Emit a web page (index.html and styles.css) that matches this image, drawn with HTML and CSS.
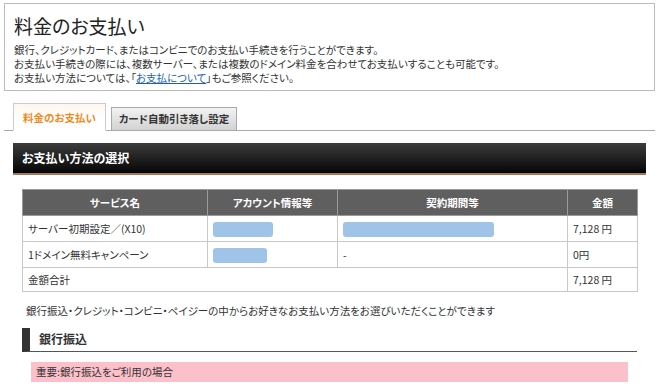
FILE: index.html
```html
<!DOCTYPE html>
<html lang="ja">
<head>
    <meta charset="UTF-8">
    <meta name="viewport" content="width=device-width, initial-scale=1.0">
    <title>料金のお支払い</title>
    <link rel="stylesheet" href="styles.css">
</head>
<body>
    <div class="page">
        <div class="intro">
            <h1>料金のお支払い</h1>
            <p>銀行、クレジットカード、またはコンビニでのお支払い手続きを行うことができます。</p>
            <p>お支払い手続きの際には、複数サーバー、または複数のドメイン料金を合わせてお支払いすることも可能です。</p>
            <p>お支払い方法については、「<a href="#">お支払について</a>」もご参照ください。</p>
        </div>

        <div class="tabs">
            <span class="tab active">料金のお支払い</span>
            <span class="tab">カード自動引き落し設定</span>
        </div>

        <div class="section-bar">お支払い方法の選択</div>

        <table class="bill">
            <colgroup>
                <col class="col-name">
                <col class="col-account">
                <col class="col-period">
                <col class="col-price">
            </colgroup>
            <tr>
                <th>サービス名</th>
                <th>アカウント情報等</th>
                <th>契約期間等</th>
                <th>金額</th>
            </tr>
            <tr>
                <td>サーバー初期設定／(X10)</td>
                <td><span class="mask" style="width:60px"></span></td>
                <td><span class="mask" style="width:151px"></span></td>
                <td>7,128 円</td>
            </tr>
            <tr>
                <td>1ドメイン無料キャンペーン</td>
                <td><span class="mask" style="width:54px"></span></td>
                <td>-</td>
                <td>0円</td>
            </tr>
            <tr class="total">
                <td colspan="3">金額合計</td>
                <td>7,128 円</td>
            </tr>
        </table>

        <p class="note">銀行振込・クレジット・コンビニ・ペイジーの中からお好きなお支払い方法をお選びいただくことができます</p>

        <h2 class="sub-head">銀行振込</h2>
        <div class="alert">重要:銀行振込をご利用の場合</div>
    </div>
</body>
</html>
```

FILE: styles.css
```css
body {
    margin: 0;
    background-color: white;
    color: #333;
    font-family: "Noto Sans CJK JP", "Noto Sans", sans-serif;
    font-size: 10.5px;
    font-feature-settings: "palt";
}
.page {
    padding: 3px 5px 0 4px;
}
.intro {
    border: 1px solid #bbb;
    height: 71px;
    padding: 9px 9px 6px;
}
.intro h1 {
    margin: 0 0 4px;
    font-size: 19px;
    font-weight: normal;
    line-height: 26px;
    color: #222;
}
.intro p {
    margin: 0;
    line-height: 14px;
}
.intro a {
    color: #1a5fbf;
}
.tabs {
    display: flex;
    align-items: flex-end;
    gap: 5px;
    margin-top: 12px;
    padding-left: 9px;
    height: 27px;
    border-bottom: 1px solid #aaa;
}
.tab {
    box-sizing: border-box;
    width: 126px;
    height: 24px;
    margin-bottom: -1px;
    line-height: 22px;
    text-align: center;
    font-weight: bold;
    color: #333;
    border: 1px solid #a8a8a8;
    border-bottom-color: #aaa;
    background: linear-gradient(#f2f2f2, #d2d2d2);
}
.tab.active {
    width: 93px;
    height: 28px;
    line-height: 28px;
    color: #f08a1c;
    border-color: #ccc;
    border-bottom-color: white;
    background: linear-gradient(#fdf6ee, white 60%);
}
.section-bar {
    margin: 12px 9px 0;
    height: 30px;
    padding-left: 9px;
    line-height: 30px;
    font-size: 12px;
    font-weight: bold;
    color: white;
    background: linear-gradient(#3c3c3c, #050505);
    border-bottom: 2px solid #a27a55;
}
.bill {
    width: 615px;
    margin: 14px 18px 0;
    border-collapse: collapse;
    table-layout: fixed;
}
.col-name { width: 185px; }
.col-account { width: 130px; }
.col-period { width: 230px; }
.col-price { width: 70px; }
.bill th,
.bill td {
    border: 1px solid #c8c8c8;
    text-align: left;
    padding: 0 5px;
    height: 25px;
    font-weight: normal;
    white-space: nowrap;
}
.bill th {
    background-color: #5f5f5f;
    color: white;
    font-weight: bold;
    text-align: center;
    border-color: #9a9a9a;
}
.bill .total td {
    height: 23px;
}
.mask {
    display: inline-block;
    height: 15px;
    vertical-align: middle;
    border-radius: 3px;
    background-color: #9fc4e8;
}
.note {
    margin: 11px 0 0 22px;
    line-height: 16px;
}
.sub-head {
    margin: 9px 18px 0;
    height: 23px;
    padding-left: 9px;
    line-height: 22px;
    font-size: 12px;
    font-weight: bold;
    border-left: 8px solid #333;
    border-bottom: 1px solid #555;
}
.alert {
    margin: 10px 27px 0 27px;
    height: 20px;
    padding-left: 5px;
    line-height: 20px;
    background-color: #fcc0cb;
}
```
